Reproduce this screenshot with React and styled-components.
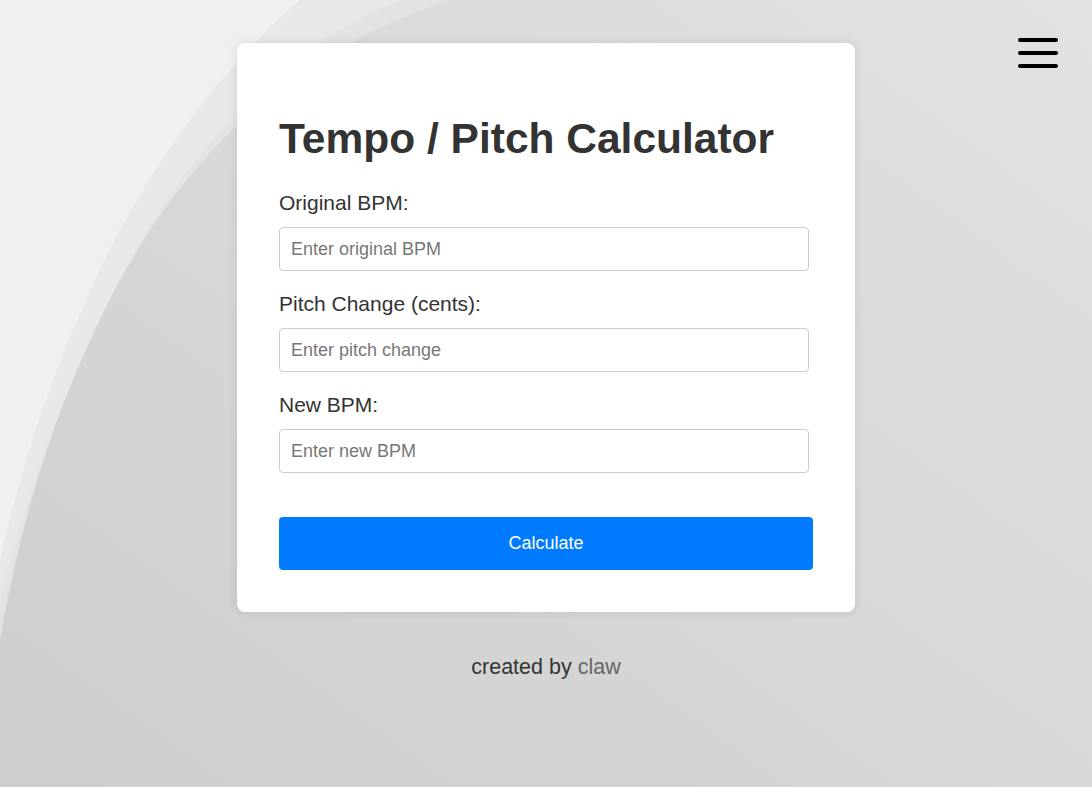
import styled, { createGlobalStyle } from 'styled-components'

const GlobalStyle = createGlobalStyle`
  html, body {
    margin: 0;
    padding: 0;
    height: 100%;
  }
  body {
    font-family: "Liberation Sans", Arial, sans-serif;
    background: #d9d9d9;
    overflow: hidden;
  }
`

const Page = styled.div`
  position: relative;
  width: 100%;
  min-height: 787px;
  display: flex;
  flex-direction: column;
  align-items: center;
  padding-top: 43px;
  box-sizing: border-box;
`

const Backdrop = styled.svg`
  position: absolute;
  inset: 0;
  width: 100%;
  height: 100%;
  z-index: 0;
`

const MenuButton = styled.button`
  position: absolute;
  top: 36px;
  right: 34px;
  width: 40px;
  height: 34px;
  padding: 2px 0;
  border: none;
  background: none;
  display: flex;
  flex-direction: column;
  justify-content: space-between;
  align-items: center;
  cursor: pointer;
  z-index: 2;
  box-sizing: border-box;
`

const MenuBar = styled.span`
  display: block;
  width: 40px;
  height: 4px;
  border-radius: 2px;
  background: #000;
`

const Card = styled.div`
  position: relative;
  z-index: 1;
  width: 618px;
  box-sizing: border-box;
  padding: 72px 42px 42px;
  background: #fff;
  border-radius: 8px;
  box-shadow: 0 0 10px rgba(0, 0, 0, 0.1);
`

const Title = styled.h1`
  margin: 0 0 28px;
  font-size: 42.5px;
  line-height: 48px;
  font-weight: bold;
  color: #333;
`

const Field = styled.div`
  display: flex;
  flex-direction: column;
  margin-bottom: 21px;
`

const Label = styled.label`
  font-size: 21px;
  line-height: 24px;
  color: #333;
  margin-bottom: 12px;
`

const Input = styled.input`
  width: 530px;
  height: 44px;
  box-sizing: border-box;
  padding: 0 11px;
  border: 1px solid #ccc;
  border-radius: 4px;
  font-family: "Liberation Sans", Arial, sans-serif;
  font-size: 18px;
  color: #333;
  outline: none;

  &::placeholder {
    color: #777;
  }
`

const Button = styled.button`
  display: block;
  width: 100%;
  height: 53px;
  margin-top: 44px;
  border: none;
  border-radius: 4px;
  background: #007bff;
  color: #fff;
  font-family: "Liberation Sans", Arial, sans-serif;
  font-size: 18px;
  cursor: pointer;
`

const Footer = styled.p`
  position: relative;
  z-index: 1;
  margin: 43px 0 0;
  font-size: 21.5px;
  color: #333;
`

const FooterLink = styled.a`
  color: #666;
  text-decoration: none;
`

const fields = [
  { id: 'original', label: 'Original BPM:', placeholder: 'Enter original BPM' },
  { id: 'pitch', label: 'Pitch Change (cents):', placeholder: 'Enter pitch change' },
  { id: 'newbpm', label: 'New BPM:', placeholder: 'Enter new BPM' },
]

function Background() {
  return (
    <Backdrop viewBox="0 0 1092 787" preserveAspectRatio="none">
      <defs>
        <linearGradient id="bg" x1="0" y1="1" x2="1" y2="0">
          <stop offset="0" stopColor="#cdcdcd" />
          <stop offset="0.5" stopColor="#d8d8d8" />
          <stop offset="1" stopColor="#e2e2e2" />
        </linearGradient>
      </defs>
      <rect width="1092" height="787" fill="url(#bg)" />
      <path d="M0 0 H450 C330 40 230 110 150 230 C80 340 30 470 0 640 Z" fill="#e3e3e3" />
      <path d="M0 0 H400 C300 40 220 120 160 210 C90 320 40 450 0 600 Z" fill="#e8e8e8" />
      <path d="M0 0 H300 C230 60 160 150 110 250 C60 350 25 450 0 560 Z" fill="#f0f0f0" />
    </Backdrop>
  )
}

export default function App() {
  return (
    <>
      <GlobalStyle />
      <Page>
        <Background />
        <MenuButton aria-label="Menu">
          <MenuBar />
          <MenuBar />
          <MenuBar />
        </MenuButton>
        <Card>
          <Title>Tempo / Pitch Calculator</Title>
          {fields.map((f) => (
            <Field key={f.id}>
              <Label htmlFor={f.id}>{f.label}</Label>
              <Input id={f.id} type="number" placeholder={f.placeholder} />
            </Field>
          ))}
          <Button>Calculate</Button>
        </Card>
        <Footer>
          created by <FooterLink href="#">claw</FooterLink>
        </Footer>
      </Page>
    </>
  )
}
